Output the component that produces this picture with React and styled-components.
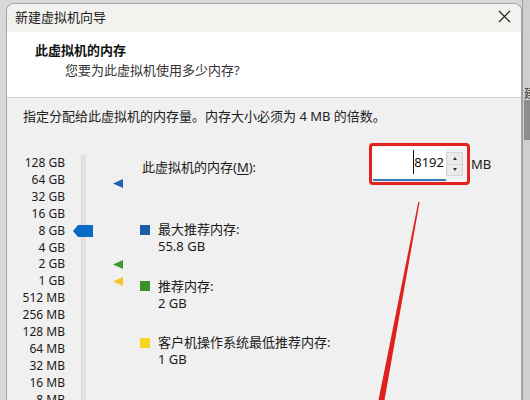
import React from 'react';
import styled, { createGlobalStyle } from 'styled-components';

const GlobalStyle = createGlobalStyle`
  html, body { margin: 0; padding: 0; background: #d6d6d6; }
  body {
    font-family: "Noto Sans", "Noto Sans CJK SC", sans-serif;
    overflow: hidden;
  }
`;

const Page = styled.div`
  position: relative;
  width: 530px;
  height: 400px;
  overflow: hidden;
  display: flex;
  align-items: flex-start;
  padding: 3px 0 0 6px;
  box-sizing: border-box;
  background: #d8d8d8;
`;

const Window = styled.div`
  flex: none;
  width: 516px;
  height: 397px;
  box-sizing: border-box;
  display: flex;
  flex-direction: column;
  border: 1px solid #a6a6a6;
  border-bottom: none;
  border-radius: 8px 8px 0 0;
  overflow: hidden;
  background: #f0f0f0;
  color: #1a1a1a;
`;

const TitleBar = styled.div`
  flex: none;
  height: 28px;
  box-sizing: border-box;
  display: flex;
  align-items: center;
  justify-content: space-between;
  padding: 0 10px 3px 8px;
  background: #f3f2ef;
  font-size: 13px;
  line-height: 16px;
  color: #1b1b1b;
`;

const CloseIcon = styled.svg`
  width: 13px;
  height: 13px;
  display: block;
`;

const Header = styled.div`
  flex: none;
  height: 66px;
  box-sizing: border-box;
  background: #ffffff;
  border-bottom: 1px solid #d2d2d2;
  padding: 9px 0 0 28px;
`;

const HeaderTitle = styled.div`
  font-size: 13px;
  font-weight: 700;
  line-height: 18px;
  color: #111;
`;

const HeaderSub = styled.div`
  margin: 2px 0 0 30px;
  font-size: 13px;
  line-height: 18px;
  color: #333;
`;

const Body = styled.div`
  flex: 1;
  display: flex;
  flex-direction: column;
  padding-top: 9px;
`;

const Instruction = styled.div`
  padding-left: 16px;
  font-size: 13px;
  line-height: 18px;
  color: #222;
`;

const ContentRow = styled.div`
  margin-top: 18px;
  display: flex;
  align-items: flex-start;
`;

const SliderBlock = styled.div`
  flex: none;
  margin-top: 12px;
  display: flex;
  align-items: stretch;
`;

const ScaleLabels = styled.div`
  width: 58px;
  text-align: right;
  font-size: 12px;
  line-height: 16.9px;
  color: #1a1a1a;
  white-space: nowrap;
`;

const Track = styled.div`
  position: relative;
  margin-left: 16px;
  width: 5px;
  background: #e2e2e2;
  border-left: 1px solid #dadada;
  box-sizing: border-box;
`;

const Thumb = styled.svg`
  position: absolute;
  left: -9px;
  width: 20px;
  height: 12px;
  margin-top: -6px;
`;

const MarkerCol = styled.div`
  position: relative;
  margin-left: 27px;
  width: 10px;
`;

const Marker = styled.svg`
  position: absolute;
  left: 0;
  width: 10px;
  height: 9px;
  margin-top: -4.5px;
`;

const RightCol = styled.div`
  margin-left: 17px;
  display: flex;
  flex-direction: column;
`;

const InputRow = styled.div`
  height: 42px;
  display: flex;
  align-items: center;
`;

const MemLabel = styled.div`
  width: 227px;
  padding-left: 2px;
  margin-top: 6px;
  font-size: 13px;
  line-height: 18px;
  white-space: nowrap;
`;

const Underlined = styled.span`
  text-decoration: underline;
  text-underline-offset: 2px;
`;

const AnnotBox = styled.div`
  width: 101px;
  height: 42px;
  box-sizing: border-box;
  border: 3px solid #e2231f;
  border-radius: 4px;
  padding: 1px 0 1px 1px;
  display: flex;
  align-items: center;
  background: #f3f3f3;
`;

const Field = styled.div`
  width: 73px;
  height: 34px;
  box-sizing: border-box;
  background: #fff;
  border-bottom: 2px solid #3b76b4;
  display: flex;
  align-items: center;
  justify-content: flex-end;
  padding: 0 2px 3px 0;
  font-size: 13px;
  line-height: 18px;
  color: #111;
`;

const Caret = styled.span`
  display: inline-block;
  width: 1px;
  height: 24px;
  background: #111;
  margin-right: 0;
`;

const Spinner = styled.div`
  width: 17px;
  height: 24px;
  box-sizing: border-box;
  border: 1px solid #d3d3d3;
  background: #ebebeb;
  display: flex;
  flex-direction: column;
`;

const SpinHalf = styled.div`
  flex: 1;
  display: flex;
  align-items: center;
  justify-content: center;
  border-top: ${(p) => (p.$lower ? '1px solid #dadada' : 'none')};
`;

const Arrow = styled.span`
  width: 0;
  height: 0;
  border-left: 2.5px solid transparent;
  border-right: 2.5px solid transparent;
  ${(p) =>
    p.$down ? 'border-top: 3px solid #333;' : 'border-bottom: 3px solid #333;'}
`;

const Unit = styled.div`
  margin-left: 1px;
  font-size: 13px;
  line-height: 18px;
`;

const Legend = styled.div`
  margin-top: 36px;
  display: flex;
  flex-direction: column;
  gap: 22.5px;
`;

const LegendItem = styled.div`
  display: grid;
  grid-template-columns: 10px auto;
  column-gap: 8px;
  font-size: 13px;
  line-height: 17px;
`;

const Swatch = styled.span`
  width: 10px;
  height: 10px;
  margin-top: 3.5px;
  background: ${(p) => p.$color};
`;

const LegendValue = styled.span`
  grid-column: 2;
`;

const Strip = styled.div`
  flex: 1;
  align-self: stretch;
  margin-top: -3px;
  display: flex;
  flex-direction: column;
  overflow: hidden;
  border-left: 1px solid #9d9d9d;
  background: #cfcfcf;
`;

const StripGlyph = styled.div`
  margin-top: 88px;
  margin-left: 1px;
  font-size: 12px;
  line-height: 12px;
  color: #333;
  white-space: nowrap;
`;

const StripBar = styled.div`
  margin-top: 0;
  margin-left: 1px;
  width: 6px;
  height: 40px;
  background: #8d8d8d;
`;

const Overlay = styled.svg`
  position: absolute;
  left: 0;
  top: 0;
  width: 530px;
  height: 400px;
  pointer-events: none;
`;

const scale = [
  '128 GB', '64 GB', '32 GB', '16 GB', '8 GB', '4 GB', '2 GB', '1 GB',
  '512 MB', '256 MB', '128 MB', '64 MB', '32 MB', '16 MB', '8 MB', '4 MB',
];

const ROW = 16.9;
const posFor = (gb) => ROW / 2 + ROW * Math.log2(128 / gb);

const markers = [
  { gb: 55.8, color: '#1d63b0' },
  { gb: 2, color: '#3c9a33' },
  { gb: 1, color: '#f5c62a' },
];

const legend = [
  { color: '#1b5ea6', label: '最大推荐内存:', value: '55.8 GB' },
  { color: '#3b8f2b', label: '推荐内存:', value: '2 GB' },
  { color: '#f8d51e', label: '客户机操作系统最低推荐内存:', value: '1 GB' },
];

export default function App() {
  return (
    <>
      <GlobalStyle />
      <Page>
        <Window>
          <TitleBar>
            <span>新建虚拟机向导</span>
            <CloseIcon viewBox="0 0 13 13">
              <path d="M1 1 L12 12 M12 1 L1 12" stroke="#222" strokeWidth="1.2" fill="none" />
            </CloseIcon>
          </TitleBar>
          <Header>
            <HeaderTitle>此虚拟机的内存</HeaderTitle>
            <HeaderSub>您要为此虚拟机使用多少内存?</HeaderSub>
          </Header>
          <Body>
            <Instruction>指定分配给此虚拟机的内存量。内存大小必须为 4 MB 的倍数。</Instruction>
            <ContentRow>
              <SliderBlock>
                <ScaleLabels>
                  {scale.map((s) => (
                    <div key={s}>{s}</div>
                  ))}
                </ScaleLabels>
                <Track>
                  <Thumb viewBox="0 0 20 12" style={{ top: posFor(8) }}>
                    <polygon points="0,6 5,0 20,0 20,12 5,12" fill="#0a6ac6" />
                  </Thumb>
                </Track>
                <MarkerCol>
                  {markers.map((m) => (
                    <Marker key={m.gb} viewBox="0 0 10 9" style={{ top: posFor(m.gb) }}>
                      <polygon points="0,4.5 10,0 10,9" fill={m.color} />
                    </Marker>
                  ))}
                </MarkerCol>
              </SliderBlock>
              <RightCol>
                <InputRow>
                  <MemLabel>
                    此虚拟机的内存(<Underlined>M</Underlined>):
                  </MemLabel>
                  <AnnotBox>
                    <Field>
                      <Caret />
                      8192
                    </Field>
                    <Spinner>
                      <SpinHalf>
                        <Arrow />
                      </SpinHalf>
                      <SpinHalf $lower>
                        <Arrow $down />
                      </SpinHalf>
                    </Spinner>
                  </AnnotBox>
                  <Unit>MB</Unit>
                </InputRow>
                <Legend>
                  {legend.map((l) => (
                    <LegendItem key={l.label}>
                      <Swatch $color={l.color} />
                      <span>{l.label}</span>
                      <LegendValue>{l.value}</LegendValue>
                    </LegendItem>
                  ))}
                </Legend>
              </RightCol>
            </ContentRow>
          </Body>
        </Window>
        <Strip>
          <StripGlyph>建</StripGlyph>
          <StripBar />
        </Strip>
        <Overlay viewBox="0 0 530 400">
          <polygon points="418.3,202 419.6,202 384.5,400 378.5,400" fill="#e0201c" />
        </Overlay>
      </Page>
    </>
  );
}
